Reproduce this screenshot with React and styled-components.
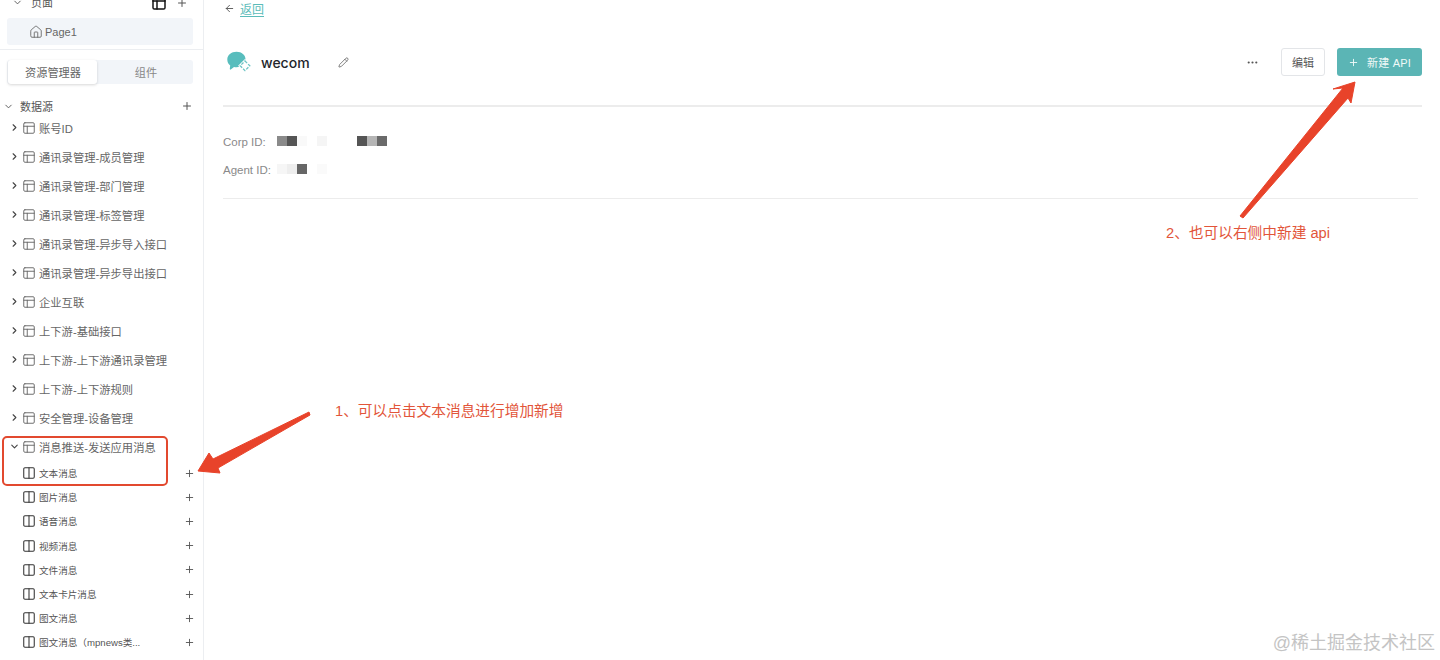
import React from 'react';
import styled, { createGlobalStyle } from 'styled-components';
import {
  ArrowLeft,
  ChevronDown,
  ChevronRight,
  Columns2,
  Ellipsis,
  House,
  PanelsTopLeft,
  Pencil,
  Plus,
} from 'lucide-react';

const GlobalStyle = createGlobalStyle`
  html, body {
    margin: 0;
    padding: 0;
    background: #fff;
    font-family: "Liberation Sans", "Noto Sans CJK SC", sans-serif;
  }
`;

const Page = styled.div`
  position: relative;
  display: flex;
  width: 1440px;
  height: 660px;
  overflow: hidden;
  background: #fff;
`;

const Sidebar = styled.aside`
  display: flex;
  flex-direction: column;
  flex: none;
  width: 203px;
  height: 660px;
  border-right: 1px solid #eceef1;
`;

const PagesSection = styled.div`
  display: flex;
  flex-direction: column;
  margin-top: -5px;
  padding-bottom: 4px;
  border-bottom: 1px solid #eceef1;
`;

const PagesHead = styled.div`
  display: flex;
  align-items: center;
  height: 20px;
  padding: 0 15px 5px 12px;
  box-sizing: border-box;
  font-size: 11px;
  line-height: 14px;
  color: #555;
`;

const HeadLabel = styled.span`
  flex: 1;
  margin-left: 8px;
`;

const PageItem = styled.div`
  display: flex;
  align-items: center;
  gap: 2px;
  height: 27px;
  margin: 3px 10px 0 7px;
  padding-left: 22px;
  border-radius: 3px;
  background: #f2f5f9;
  font-size: 11px;
  color: #666;
`;

const Tabs = styled.div`
  display: flex;
  height: 24px;
  margin: 10px 10px 0 7px;
  border-radius: 3px;
  background: #f2f5f9;
`;

const Tab = styled.div`
  display: flex;
  align-items: center;
  justify-content: center;
  box-sizing: border-box;
  width: ${(p) => (p.$active ? '90px' : '97px')};
  margin-left: ${(p) => (p.$active ? '1px' : '0')};
  padding-left: ${(p) => (p.$active ? '1px' : '2px')};
  border-radius: 3px;
  background: ${(p) => (p.$active ? '#fff' : 'transparent')};
  box-shadow: ${(p) => (p.$active ? '0 1px 3px rgba(0, 0, 0, 0.16)' : 'none')};
  font-size: 11.2px;
  color: ${(p) => (p.$active ? '#666' : '#888')};
`;

const SourceHead = styled.div`
  display: flex;
  align-items: center;
  height: 14px;
  margin-top: 15px;
  padding: 0 10px 0 3px;
  font-size: 11px;
  color: #555;
`;

const SourceLabel = styled.span`
  flex: 1;
  margin-left: 6px;
`;

const TreeRow = styled.div`
  display: flex;
  align-items: center;
  height: 29px;
  padding-left: 9px;
  font-size: 11.3px;
  color: #666;
  white-space: nowrap;
`;

const RowLabel = styled.span`
  margin-left: 3px;
`;

const SubRow = styled.div`
  display: flex;
  align-items: center;
  height: 24.2px;
  padding: 0 8px 0 22px;
  box-sizing: border-box;
  font-size: 9.6px;
  color: #555;
  white-space: nowrap;
`;

const SubLabel = styled.span`
  flex: 1;
  margin-left: 3px;
`;

const Main = styled.main`
  flex: 1;
  min-width: 0;
  padding: 0 18px 0 19px;
`;

const BackRow = styled.div`
  display: flex;
  align-items: center;
  gap: 5px;
  height: 16px;
  padding-left: 1px;
`;

const BackLink = styled.a`
  font-size: 12px;
  color: #5bbcb9;
  text-decoration: underline;
  text-underline-offset: 2px;
`;

const Header = styled.div`
  display: flex;
  align-items: center;
  height: 28px;
  margin-top: 32px;
`;

const Logo = styled.svg`
  flex: none;
  width: 25px;
  height: 22px;
  margin-left: 4px;
`;

const Title = styled.h1`
  margin: 0 28px 0 9px;
  font-family: Inter, "Liberation Sans", sans-serif;
  font-size: 14px;
  font-weight: 500;
  color: #23262b;
`;

const Actions = styled.div`
  display: flex;
  align-items: center;
  margin-left: auto;
`;

const EditButton = styled.button`
  width: 44px;
  height: 28px;
  margin-left: 22px;
  padding: 0;
  border: 1px solid #e3e5e8;
  border-radius: 3px;
  background: #fff;
  font: inherit;
  font-size: 11px;
  color: #555;
`;

const CreateButton = styled.button`
  display: flex;
  align-items: center;
  justify-content: center;
  gap: 8px;
  width: 85px;
  height: 28px;
  margin-left: 12px;
  padding: 0;
  border: 0;
  border-radius: 3px;
  background: #5bb5b5;
  font: inherit;
  font-size: 11px;
  color: #f0f9f8;
  letter-spacing: 0.2px;
`;

const Divider = styled.hr`
  height: ${(p) => (p.$thin ? '1px' : '2px')};
  margin: ${(p) => (p.$thin ? '14px 4px 0 0' : '29px 0 0')};
  border: 0;
  background: #ececec;
`;

const Info = styled.div`
  padding-top: 21px;
`;

const InfoRow = styled.div`
  display: flex;
  align-items: center;
  height: 28px;
  font-size: 11.5px;
  color: #8a8a8a;
`;

const InfoLabel = styled.span`
  width: 54px;
`;

const Mosaic = styled.div`
  display: flex;
  margin-top: -3px;
`;

const MosaicCell = styled.span`
  width: 10px;
  height: 10px;
  background: ${(p) => p.$color};
`;

const Overlay = styled.svg`
  position: absolute;
  top: 0;
  left: 0;
  width: 1440px;
  height: 660px;
  pointer-events: none;
`;

const Note = styled.div`
  position: absolute;
  top: ${(p) => p.$top}px;
  left: ${(p) => p.$left}px;
  font-size: 14.7px;
  line-height: 20px;
  color: #e2553a;
  white-space: nowrap;
`;

const Watermark = styled.div`
  position: absolute;
  right: 5px;
  bottom: 5px;
  font-size: 18px;
  line-height: 24px;
  color: #c4c4c4;
  white-space: nowrap;
`;

const sources = [
  '账号ID',
  '通讯录管理-成员管理',
  '通讯录管理-部门管理',
  '通讯录管理-标签管理',
  '通讯录管理-异步导入接口',
  '通讯录管理-异步导出接口',
  '企业互联',
  '上下游-基础接口',
  '上下游-上下游通讯录管理',
  '上下游-上下游规则',
  '安全管理-设备管理',
];

const messages = [
  '文本消息',
  '图片消息',
  '语音消息',
  '视频消息',
  '文件消息',
  '文本卡片消息',
  '图文消息',
  '图文消息（mpnews类...',
];

const corpCells = ['#8a8a8a', '#555', '#f9f9f9', '#fff', '#f5f5f5', '#fff', '#fff', '#fff', '#555', '#b5b5b5', '#6a6a6a'];
const agentCells = ['#f6f6f6', '#eee', '#666', '#fff', '#fafafa'];

const App = () => (
  <Page>
    <GlobalStyle />
    <Sidebar>
      <PagesSection>
        <PagesHead>
          <ChevronDown size={11} color="#555" />
          <HeadLabel>页面</HeadLabel>
          <PanelsTopLeft size={16} color="#111" strokeWidth={2.2} style={{ marginRight: 9 }} />
          <Plus size={12} color="#555" />
        </PagesHead>
        <PageItem>
          <House size={14} color="#666" strokeWidth={1.5} />
          Page1
        </PageItem>
      </PagesSection>

      <Tabs>
        <Tab $active>资源管理器</Tab>
        <Tab>组件</Tab>
      </Tabs>

      <SourceHead>
        <ChevronDown size={11} color="#555" strokeWidth={2} />
        <SourceLabel>数据源</SourceLabel>
        <Plus size={12} color="#555" />
      </SourceHead>

      {sources.map((name) => (
        <TreeRow key={name}>
          <ChevronRight size={11} color="#444" strokeWidth={2.4} style={{ marginRight: 2 }} />
          <PanelsTopLeft size={14} color="#666" strokeWidth={1.6} />
          <RowLabel>{name}</RowLabel>
        </TreeRow>
      ))}
      <TreeRow>
        <ChevronDown size={11} color="#444" strokeWidth={2.4} style={{ marginRight: 2 }} />
        <PanelsTopLeft size={14} color="#666" strokeWidth={1.6} />
        <RowLabel>消息推送-发送应用消息</RowLabel>
      </TreeRow>
      {messages.map((name) => (
        <SubRow key={name}>
          <Columns2 size={14} color="#333" strokeWidth={1.8} />
          <SubLabel>{name}</SubLabel>
          <Plus size={11} color="#555" />
        </SubRow>
      ))}
    </Sidebar>

    <Main>
      <BackRow>
        <ArrowLeft size={11} color="#555" />
        <BackLink>返回</BackLink>
      </BackRow>

      <Header>
        <Logo viewBox="0 0 25 22">
          <path
            fill="#58bdbd"
            d="M9.500.8c5.200 0 9 3.300 9 7.500 0 4.300-3.800 8-9 8-.9 0-1.700-.1-2.500-.3L3.800 18.500c-.6.4-1.200 0-1-.7l.4-3.300C1.300 13 .3 10.800.3 8.400.3 4.200 4.300.8 9.500.8Z"
          />
          <path
            fill="#fff"
            stroke="#fff"
            strokeWidth="3"
            d="M18 10l4.800 4.800-4.800 4.800-4.800-4.800Z"
          />
          <path
            fill="#fff"
            stroke="#6cc4c4"
            strokeWidth="1.300"
            strokeDasharray="3 1.400"
            d="M18 10l4.800 4.800-4.800 4.800-4.800-4.800Z"
          />
        </Logo>
        <Title>wecom</Title>
        <Pencil size={11} color="#555" strokeWidth={1.6} />
        <Actions>
          <Ellipsis size={13} color="#555" />
          <EditButton>编辑</EditButton>
          <CreateButton>
            <Plus size={11} color="#f0f9f8" />
            新建 API
          </CreateButton>
        </Actions>
      </Header>

      <Divider />

      <Info>
        <InfoRow>
          <InfoLabel>Corp ID:</InfoLabel>
          <Mosaic>
            {corpCells.map((color, i) => (
              <MosaicCell key={i} $color={color} />
            ))}
          </Mosaic>
        </InfoRow>
        <InfoRow>
          <InfoLabel>Agent ID:</InfoLabel>
          <Mosaic>
            {agentCells.map((color, i) => (
              <MosaicCell key={i} $color={color} />
            ))}
          </Mosaic>
        </InfoRow>
      </Info>

      <Divider $thin />
    </Main>

    <Overlay viewBox="0 0 1440 660">
      <rect x="3" y="437" width="164" height="48" rx="4" fill="none" stroke="#e2492f" strokeWidth="2" />
      <polygon
        fill="#e8432a"
        stroke="#e8432a"
        strokeWidth="1"
        strokeLinejoin="round"
        points="198,471 209,453 213,459 309,412 310,415 218,468 220,473"
      />
      <polygon
        fill="#e8432a"
        stroke="#e8432a"
        strokeWidth="1"
        strokeLinejoin="round"
        points="1355,82 1333,89 1343,88 1240,216 1243,218 1348,98 1351,103"
      />
    </Overlay>

    <Note $left={335} $top={401}>1、可以点击文本消息进行增加新增</Note>
    <Note $left={1166} $top={223}>2、也可以右侧中新建 api</Note>
    <Watermark>@稀土掘金技术社区</Watermark>
  </Page>
);

export default App;
